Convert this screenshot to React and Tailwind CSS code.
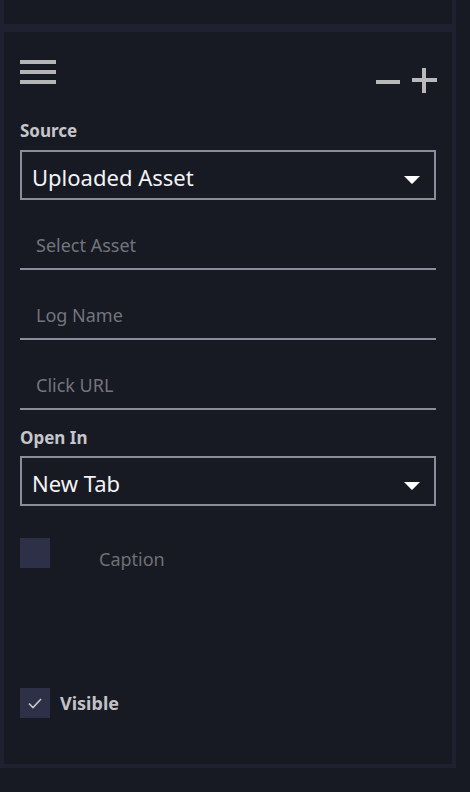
import { useState } from 'react';

function Caret() {
  return (
    <svg width="16" height="8" viewBox="0 0 16 8" className="mt-[10px] shrink-0">
      <path d="M0 0 H16 L8.6 7.6 Q8 8 7.4 7.6 Z" fill="#ffffff" />
    </svg>
  );
}

function SelectBox({ value }) {
  return (
    <div className="h-[50px] border-2 border-[#8c8d9c] flex items-center justify-between pl-[10px] pr-[14px]">
      <span className="mt-[4px] text-[22px] leading-[30px] text-[#f4f4f6]">{value}</span>
      <Caret />
    </div>
  );
}

function LineField({ placeholder }) {
  return (
    <div className="h-[70px] border-b-2 border-[#8c8d9c] flex items-end pl-4 pb-[11px]">
      <span className="text-[18px] leading-[24px] text-[#74757c]">{placeholder}</span>
    </div>
  );
}

function Label({ children, className }) {
  return <div className={'text-[17px] leading-[20px] font-bold text-[#c6c6ca] ' + className}>{children}</div>;
}

export default function App() {
  const [visible, setVisible] = useState(true);

  return (
    <div className="min-h-screen bg-[#171923]" style={{ fontFamily: '"Noto Sans", "Open Sans", sans-serif' }}>
      <div className="w-[456px] bg-[#1f2130] px-1 pb-1 flex flex-col gap-2">
        {/* bottom of the card above */}
        <div className="h-6 bg-[#171923]" />

        <div className="h-[732px] bg-[#171923] px-4 pt-7 flex flex-col">
          {/* Header */}
          <div className="flex justify-between items-start">
            <div className="flex flex-col gap-[6px] w-9">
              <div className="h-1 bg-[#b5b5b8]" />
              <div className="h-1 bg-[#b5b5b8]" />
              <div className="h-1 bg-[#b5b5b8]" />
            </div>
            <svg width="61" height="25" viewBox="0 0 61 25" className="mt-2 mr-[-1px]">
              <rect x="0" y="12" width="24" height="4" fill="#b9b9bc" />
              <rect x="36" y="10" width="25" height="4" fill="#b9b9bc" />
              <rect x="46" y="0" width="4" height="25" fill="#b9b9bc" />
            </svg>
          </div>

          <Label className="mt-[28px]">Source</Label>
          <div className="mt-[9px]">
            <SelectBox value="Uploaded Asset" />
          </div>

          <LineField placeholder="Select Asset" />
          <LineField placeholder="Log Name" />
          <LineField placeholder="Click URL" />

          <Label className="mt-[18px]">Open In</Label>
          <div className="mt-2">
            <SelectBox value="New Tab" />
          </div>

          {/* Caption */}
          <div className="mt-8 flex items-start">
            <div className="w-[30px] h-[30px] bg-[#2e3047] shrink-0" />
            <span className="ml-[49px] mt-[9px] text-[18px] leading-[24px] text-[#6f7076]">Caption</span>
          </div>

          {/* Visible */}
          <button
            type="button"
            onClick={() => setVisible(!visible)}
            className="mt-[117px] flex items-center gap-[10px] self-start"
          >
            <span className="w-[30px] h-[30px] bg-[#2e3047] flex items-center justify-center">
              {visible && (
                <svg width="14" height="11" viewBox="0 0 14 11">
                  <path d="M1 5.5 L5 9.5 L13 1" fill="none" stroke="#c8c8cc" strokeWidth="1.6" />
                </svg>
              )}
            </span>
            <span className="text-[18px] leading-[24px] font-bold text-[#c2c2c6]">Visible</span>
          </button>
        </div>
      </div>
    </div>
  );
}
